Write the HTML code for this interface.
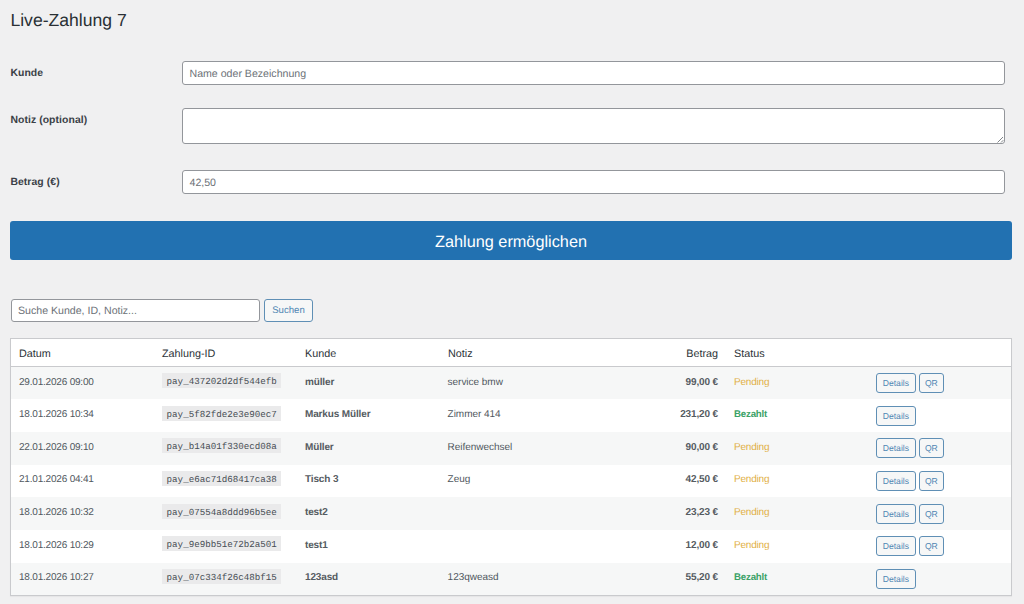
<!DOCTYPE html>
<html lang="de">
<head>
<meta charset="utf-8">
<title>Live-Zahlung 7</title>
<style>
*{box-sizing:border-box;margin:0;padding:0}
html,body{width:1024px;height:604px;overflow:hidden;background:#f0f0f1}
body{text-rendering:geometricPrecision;font-family:"Liberation Sans",sans-serif;color:#3c434a;font-size:10px;position:relative}
h1{position:absolute;left:10.4px;top:8.3px;font-size:17.6px;font-weight:400;color:#2a3035;line-height:24px;white-space:nowrap}
.lbl{position:absolute;left:10.4px;font-weight:700;font-size:10.4px;letter-spacing:.08px;color:#3a4046;line-height:14px;white-space:nowrap}
.inp{position:absolute;left:182px;width:823px;background:#fff;border:1px solid #93969b;border-radius:3px;font-size:10.6px;line-height:24px;padding:0 6.5px;color:#6c7177;white-space:nowrap}
.big{position:absolute;left:10px;top:221px;width:1002px;height:39px;background:#2271b1;border-radius:3px;color:#fff;font-size:16.3px;text-align:center;line-height:42.2px;overflow:hidden}
.sbtn{position:absolute;left:264px;top:299px;width:49px;height:23px;border:1px solid #5f8fb5;border-radius:3px;background:#f6f7f7;color:#4f86b3;font-size:9.6px;line-height:22px;text-align:center}
table{position:absolute;left:10px;top:338px;width:1002px;border-collapse:separate;border-spacing:0;border:1px solid #c9cacd;background:#fff;table-layout:fixed;box-shadow:0 1px 1px rgba(0,0,0,.04)}
th{height:27.8px;font-weight:400;text-align:left;font-size:10.8px;color:#2c3338;border-bottom:1px solid #c9cacd;padding:3px 8px 0;white-space:nowrap}
td{height:32.63px;padding:0 8px 2.2px;font-size:10px;color:#50575e;white-space:nowrap;vertical-align:middle;letter-spacing:-.2px}
td:last-child{padding-bottom:0;padding-left:7.2px;letter-spacing:0}
tbody tr:nth-child(odd) td{background:#f6f7f7}
td:nth-child(4){letter-spacing:-.03px;padding-left:7.6px}
.r{text-align:right}
code{font-family:"Liberation Mono",monospace;font-size:9.2px;background:#eaeaeb;padding:3.3px 4.6px .8px;position:relative;top:-.1px;color:#474d54;letter-spacing:0}
b{color:#555b61;font-size:10px;letter-spacing:-.14px}
.pen{color:#e1b046}
.ok{color:#3ba267;font-weight:700;font-size:9.7px}
.btn{display:inline-block;border:1px solid #5f8fb5;border-radius:3px;background:#f6f7f7;color:#4f86b3;font-size:8.6px;line-height:18px;height:20px;width:39.4px;text-align:center;margin-right:3.5px;vertical-align:middle}
.btn.q{width:24.6px}
</style>
</head>
<body>
<h1>Live-Zahlung 7</h1>
<div class="lbl" style="top:67px">Kunde</div>
<div class="inp" style="top:61px;height:24px">Name oder Bezeichnung</div>
<div class="lbl" style="top:114px">Notiz (optional)</div>
<div class="inp" style="top:108px;height:36px"><svg width="8" height="8" viewBox="0 0 8 8" style="position:absolute;right:0;bottom:0"><path d="M1.5 7.5L7 2M5 7.5L7.3 5.2" stroke="#74787d" stroke-width=".9" fill="none"/></svg></div>
<div class="lbl" style="top:176px">Betrag (€)</div>
<div class="inp" style="top:170px;height:24px">42,50</div>
<div class="big">Zahlung ermöglichen</div>
<div class="inp" style="left:11px;width:249px;top:299px;height:23px;line-height:22px;padding-left:6px">Suche Kunde, ID, Notiz...</div>
<div class="sbtn">Suchen</div>
<table>
<colgroup><col style="width:143px"><col style="width:143px"><col style="width:143px"><col style="width:200px"><col style="width:86px"><col style="width:143px"><col></colgroup>
<thead><tr><th>Datum</th><th>Zahlung-ID</th><th>Kunde</th><th>Notiz</th><th class="r">Betrag</th><th>Status</th><th></th></tr></thead>
<tbody>
<tr><td>29.01.2026 09:00</td><td><code>pay_437202d2df544efb</code></td><td><b>müller</b></td><td>service bmw</td><td class="r"><b>99,00 €</b></td><td><span class="pen">Pending</span></td><td><span class="btn">Details</span><span class="btn q">QR</span></td></tr>
<tr><td>18.01.2026 10:34</td><td><code>pay_5f82fde2e3e90ec7</code></td><td><b>Markus Müller</b></td><td>Zimmer 414</td><td class="r"><b>231,20 €</b></td><td><span class="ok">Bezahlt</span></td><td><span class="btn">Details</span></td></tr>
<tr><td>22.01.2026 09:10</td><td><code>pay_b14a01f330ecd08a</code></td><td><b>Müller</b></td><td>Reifenwechsel</td><td class="r"><b>90,00 €</b></td><td><span class="pen">Pending</span></td><td><span class="btn">Details</span><span class="btn q">QR</span></td></tr>
<tr><td>21.01.2026 04:41</td><td><code>pay_e6ac71d68417ca38</code></td><td><b>Tisch 3</b></td><td>Zeug</td><td class="r"><b>42,50 €</b></td><td><span class="pen">Pending</span></td><td><span class="btn">Details</span><span class="btn q">QR</span></td></tr>
<tr><td>18.01.2026 10:32</td><td><code>pay_07554a8ddd96b5ee</code></td><td><b>test2</b></td><td></td><td class="r"><b>23,23 €</b></td><td><span class="pen">Pending</span></td><td><span class="btn">Details</span><span class="btn q">QR</span></td></tr>
<tr><td>18.01.2026 10:29</td><td><code>pay_9e9bb51e72b2a501</code></td><td><b>test1</b></td><td></td><td class="r"><b>12,00 €</b></td><td><span class="pen">Pending</span></td><td><span class="btn">Details</span><span class="btn q">QR</span></td></tr>
<tr><td>18.01.2026 10:27</td><td><code>pay_07c334f26c48bf15</code></td><td><b>123asd</b></td><td>123qweasd</td><td class="r"><b>55,20 €</b></td><td><span class="ok">Bezahlt</span></td><td><span class="btn">Details</span></td></tr>
</tbody>
</table>
</body>
</html>
